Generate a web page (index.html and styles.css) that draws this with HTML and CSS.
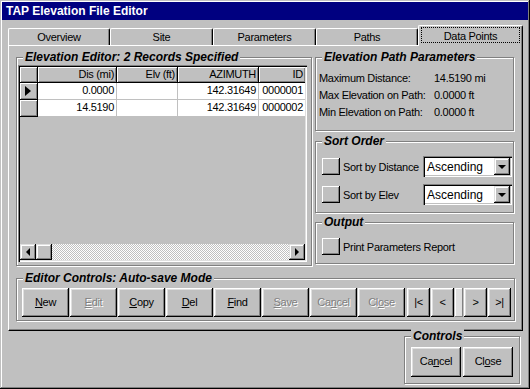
FILE: index.html
```html
<!DOCTYPE html>
<html lang="en">

<head>
    <meta charset="UTF-8">
    <meta name="viewport" content="width=device-width, initial-scale=1.0">
    <title>TAP Elevation File Editor</title>
    <link rel="stylesheet" href="styles.css">
</head>

<body>
    <div class="window">
        <div class="titlebar">TAP Elevation File Editor</div>

        <div class="client">
            <!-- Pestañas -->
            <div class="tabs">
                <div class="tab w102">Overview</div>
                <div class="tab w103">Site</div>
                <div class="tab w103">Parameters</div>
                <div class="tab w102">Paths</div>
                <div class="tab active"><span class="focus">Data Points</span></div>
            </div>

            <div class="sheet">
                <div class="top-area">
                    <!-- Grid de registros -->
                    <div class="group editor">
                        <span class="group-title">Elevation Editor: 2 Records Specified</span>
                        <div class="grid">
                            <div class="grid-rows">
                                <div class="row head">
                                    <div class="cell fixed ind"></div>
                                    <div class="cell fixed c-dis">Dis (mi)</div>
                                    <div class="cell fixed c-elv">Elv (ft)</div>
                                    <div class="cell fixed c-az">AZIMUTH</div>
                                    <div class="cell fixed c-id">ID</div>
                                </div>
                                <div class="row">
                                    <div class="cell fixed ind"><span class="pointer"></span></div>
                                    <div class="cell c-dis">0.0000</div>
                                    <div class="cell c-elv"></div>
                                    <div class="cell c-az">142.31649</div>
                                    <div class="cell c-id">0000001</div>
                                </div>
                                <div class="row">
                                    <div class="cell fixed ind"></div>
                                    <div class="cell c-dis">14.5190</div>
                                    <div class="cell c-elv"></div>
                                    <div class="cell c-az">142.31649</div>
                                    <div class="cell c-id">0000002</div>
                                </div>
                            </div>
                            <div class="hscroll">
                                <div class="sb-btn"><span class="arrow left"></span></div>
                                <div class="sb-btn"></div>
                                <div class="sb-track"></div>
                                <div class="sb-btn"><span class="arrow right"></span></div>
                            </div>
                        </div>
                    </div>

                    <div class="side">
                        <div class="group params">
                            <span class="group-title">Elevation Path Parameters</span>
                            <div class="param"><span class="param-label">Maximum Distance:</span><span>14.5190 mi</span></div>
                            <div class="param"><span class="param-label">Max Elevation on Path:</span><span>0.0000 ft</span></div>
                            <div class="param"><span class="param-label">Min Elevation on Path:</span><span>0.0000 ft</span></div>
                        </div>

                        <div class="group sort">
                            <span class="group-title">Sort Order</span>
                            <div class="sort-row">
                                <div class="toggle"></div>
                                <span class="sort-label">Sort by Distance</span>
                                <div class="combo"><span class="combo-text">Ascending</span><span class="combo-btn"><span class="arrow down"></span></span></div>
                            </div>
                            <div class="sort-row">
                                <div class="toggle"></div>
                                <span class="sort-label">Sort by Elev</span>
                                <div class="combo"><span class="combo-text">Ascending</span><span class="combo-btn"><span class="arrow down"></span></span></div>
                            </div>
                        </div>

                        <div class="group output">
                            <span class="group-title">Output</span>
                            <div class="sort-row">
                                <div class="toggle"></div>
                                <span>Print Parameters Report</span>
                            </div>
                        </div>
                    </div>
                </div>

                <!-- Botones del editor -->
                <div class="group controls-bar">
                    <span class="group-title">Editor Controls: Auto-save Mode</span>
                    <div class="btn-row">
                        <div class="btn"><u>N</u>ew</div>
                        <div class="btn off"><u>E</u>dit</div>
                        <div class="btn"><u>C</u>opy</div>
                        <div class="btn"><u>D</u>el</div>
                        <div class="btn"><u>F</u>ind</div>
                        <div class="btn off"><u>S</u>ave</div>
                        <div class="btn off">Ca<u>n</u>cel</div>
                        <div class="btn off">Cl<u>o</u>se</div>
                        <div class="btn nav first">|&lt;</div>
                        <div class="btn nav">&lt;</div>
                        <div class="nav-gap"></div>
                        <div class="btn nav">&gt;</div>
                        <div class="btn nav">&gt;|</div>
                    </div>
                </div>
            </div>

            <div class="bottom">
                <div class="group dialog">
                    <span class="group-title">Controls</span>
                    <div class="dialog-row">
                        <div class="btn big">Ca<u>n</u>cel</div>
                        <div class="btn big">Cl<u>o</u>se</div>
                    </div>
                </div>
            </div>
        </div>
    </div>
</body>

</html>
```

FILE: styles.css
```css
body {
    margin: 0;
    background-color: #c0c0c0;
    font-family: "Liberation Sans", Arial, sans-serif;
    font-size: 11px;
    letter-spacing: -0.3px;
    color: #000;
}

.window {
    width: 530px;
    height: 389px;
    box-sizing: border-box;
    padding: 2px;
    background-color: #c0c0c0;
    box-shadow: inset -1px -1px #000, inset 1px 1px #c0c0c0, inset -2px -2px #808080, inset 2px 2px #fff;
    display: flex;
    flex-direction: column;
}

.titlebar {
    height: 18px;
    line-height: 18px;
    padding-left: 4px;
    background-color: #000080;
    color: #fff;
    font-size: 12px;
    font-weight: bold;
    letter-spacing: 0;
}

.client {
    flex: 1;
    padding: 5px 5px 0 6px;
}

/* Pestañas */

.tabs {
    display: flex;
    align-items: flex-end;
    height: 20px;
}

.tab {
    height: 17px;
    line-height: 17px;
    box-sizing: border-box;
    text-align: center;
    border-top: 1px solid #fff;
    border-left: 1px solid #fff;
    border-right: 1px solid #000;
    border-radius: 2px 2px 0 0;
    box-shadow: inset -1px 0 #808080;
}

.w102 {
    width: 102px;
}

.w103 {
    width: 103px;
}

.tab.active {
    width: 105px;
    height: 21px;
    margin-bottom: -1px;
    position: relative;
    z-index: 1;
    background-color: #c0c0c0;
    padding: 1px 2px 0 2px;
}

.focus {
    display: block;
    height: 16px;
    line-height: 16px;
    box-sizing: border-box;
    border: 1px dotted #000;
}

.sheet {
    height: 286px;
    box-sizing: border-box;
    padding: 11px 0 0 7px;
    border-top: 1px solid #fff;
    border-left: 1px solid #fff;
    border-right: 1px solid #000;
    border-bottom: 1px solid #000;
    box-shadow: inset -1px -1px #808080;
}

.top-area {
    display: grid;
    grid-template-columns: 296px 199px;
    column-gap: 3px;
}

/* Cajas de grupo */

.group {
    position: relative;
    box-sizing: border-box;
    border: 1px solid #808080;
    box-shadow: inset 1px 1px #fff, 1px 1px #fff;
}

.group-title {
    position: absolute;
    top: -8px;
    left: 6px;
    padding: 0 2px;
    background-color: #c0c0c0;
    font-size: 12px;
    font-weight: bold;
    font-style: italic;
    letter-spacing: 0;
    line-height: 14px;
}

.editor {
    height: 209px;
    padding: 7px 4px 3px 1px;
}

/* Grid */

.grid {
    height: 100%;
    box-sizing: border-box;
    display: flex;
    flex-direction: column;
    box-shadow: inset 1px 1px #808080, inset 2px 2px #000, inset -1px -1px #fff, inset -2px -2px #dfdfdf;
    padding: 2px;
}

.grid-rows {
    flex: 1;
    overflow: hidden;
}

.row {
    display: flex;
    height: 17px;
}

.row.head {
    height: 16px;
}

.cell {
    flex: none;
    box-sizing: border-box;
    height: 100%;
    line-height: 15px;
    padding-right: 2px;
    text-align: right;
    white-space: nowrap;
    overflow: hidden;
    background-color: #fff;
    border-right: 1px solid #c0c0c0;
    border-bottom: 1px solid #c0c0c0;
}

.head .cell {
    line-height: 14px;
}

.cell.fixed {
    background-color: #c0c0c0;
    border-right-color: #000;
    border-bottom-color: #000;
    box-shadow: inset 1px 1px #fff, inset -1px -1px #808080;
}

.ind {
    width: 18px;
    display: flex;
    align-items: center;
    justify-content: center;
}

.c-dis {
    width: 79px;
}

.c-elv {
    width: 61px;
}

.c-az {
    width: 81px;
}

.c-id {
    width: 47px;
}

.pointer {
    width: 0;
    height: 0;
    border-top: 5px solid transparent;
    border-bottom: 5px solid transparent;
    border-left: 6px solid #000;
}

.hscroll {
    display: flex;
    height: 16px;
}

.sb-btn {
    width: 16px;
    height: 16px;
    box-sizing: border-box;
    display: flex;
    align-items: center;
    justify-content: center;
    background-color: #c0c0c0;
    box-shadow: inset -1px -1px #000, inset 1px 1px #dfdfdf, inset -2px -2px #808080, inset 2px 2px #fff;
}

.sb-track {
    flex: 1;
    background: repeating-conic-gradient(#fff 0 25%, #c0c0c0 0 50%) 0 0 / 2px 2px;
}

.arrow {
    width: 0;
    height: 0;
}

.arrow.left {
    border-top: 4px solid transparent;
    border-bottom: 4px solid transparent;
    border-right: 4px solid #000;
}

.arrow.right {
    border-top: 4px solid transparent;
    border-bottom: 4px solid transparent;
    border-left: 4px solid #000;
}

.arrow.down {
    border-left: 4px solid transparent;
    border-right: 4px solid transparent;
    border-top: 4px solid #000;
}

/* Columna derecha */

.side {
    display: flex;
    flex-direction: column;
}

.params {
    height: 74px;
    padding: 12px 0 0 3px;
}

.param {
    display: flex;
    height: 17px;
    line-height: 17px;
}

.param-label {
    width: 115px;
}

.sort {
    height: 72px;
    margin-top: 10px;
    padding: 14px 0 0 6px;
}

.sort-row {
    display: flex;
    align-items: center;
    height: 21px;
    margin-bottom: 7px;
}

.toggle {
    width: 18px;
    height: 17px;
    box-sizing: border-box;
    margin-right: 3px;
    background-color: #c0c0c0;
    box-shadow: inset -1px -1px #000, inset 1px 1px #fff, inset -2px -2px #808080;
}

.sort-label {
    width: 80px;
}

.combo {
    width: 89px;
    height: 21px;
    box-sizing: border-box;
    display: flex;
    align-items: center;
    padding: 2px;
    background-color: #fff;
    box-shadow: inset 1px 1px #808080, inset 2px 2px #000, inset -1px -1px #fff, inset -2px -2px #c0c0c0;
}

.combo-text {
    flex: 1;
    padding-left: 2px;
    font-size: 12px;
    letter-spacing: 0;
}

.combo-btn {
    width: 16px;
    height: 17px;
    box-sizing: border-box;
    display: flex;
    align-items: center;
    justify-content: center;
    background-color: #c0c0c0;
    box-shadow: inset -1px -1px #000, inset 1px 1px #dfdfdf, inset -2px -2px #808080, inset 2px 2px #fff;
}

.output {
    height: 42px;
    margin-top: 9px;
    padding: 13px 0 0 6px;
}

/* Botones */

.controls-bar {
    width: 499px;
    height: 43px;
    margin-top: 12px;
    padding: 9px 0 0 5px;
}

.btn-row {
    display: flex;
    gap: 1px;
}

.btn {
    width: 47px;
    height: 29px;
    line-height: 28px;
    box-sizing: border-box;
    text-align: center;
    background-color: #c0c0c0;
    box-shadow: inset -1px -1px #000, inset 1px 1px #fff, inset -2px -2px #808080, inset 2px 2px #dfdfdf;
}

.btn.off {
    color: #808080;
    text-shadow: 1px 1px #fff;
}

.btn.nav {
    width: 23px;
}

.btn.first {
    margin-left: 1px;
}

.nav-gap {
    width: 8px;
    height: 29px;
    box-sizing: border-box;
    background-color: #dfdfdf;
    box-shadow: inset -1px -1px #808080, inset 1px 1px #fff;
}

.bottom {
    display: flex;
    justify-content: flex-end;
    padding: 5px 3px 0 0;
}

.dialog {
    width: 116px;
    height: 48px;
    padding: 10px 0 0 6px;
}

.dialog-row {
    display: flex;
    gap: 2px;
}

.btn.big {
    width: 50px;
    height: 30px;
    line-height: 29px;
}
```
